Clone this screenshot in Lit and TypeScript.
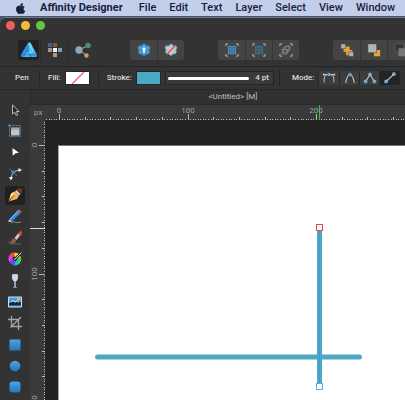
import { LitElement, html, svg, css } from "lit";
import { customElement, property, state } from "lit/decorators.js";
import { classMap } from "lit/directives/class-map.js";

const menus = ["File", "Edit", "Text", "Layer", "Select", "View", "Window"];

const flower = "M8 1.2c1.3 0 2 1 2.5 2.2 1.6-.4 3.6-.2 4.2 1.2.5 1.400-.4 2.500-1.300 3.400.9 1 1.300 2.400.4 3.600-.9 1.100-2.200 1-3.400.8-.5 1-1 1.900-2.400 1.900s-1.900-.9-2.400-1.900c-1.200.2-2.500.3-3.400-.8-.9-1.200-.5-2.600.4-3.600C1.700 7.100.800 6 1.300 4.600c.6-1.400 2.600-1.600 4.200-1.200C6 2.200 6.700 1.200 8 1.200z";

const corners = svg`<path d="M1 3.500V1h2.500M12.500 1H15v2.500M15 12.500V15h-2.500M3.500 15H1v-2.500" fill="none" stroke="#c4c4c4"/>`;

const grid = (color: string, steps: number[], weight: number) =>
  steps.map((p) => svg`<path d="M${p} 3V13M3 ${p}H13" stroke=${color} stroke-width=${weight}/>`);

const art: Record<string, unknown> = {
  designer: svg`
    <defs><linearGradient id="g" x1="0" y1="0" x2="1" y2="1"><stop offset="0" stop-color="#5fe6ee"/><stop offset="1" stop-color="#3fa2f4"/></linearGradient></defs>
    <path d="M7.500.5h2L16 13l-.8 2H.8L0 13z" fill="url(#g)"/>
    <path d="M7.500.5 0 13l.8 2H3l5-7z" fill="#2b8df0"/>
    <path d="m8 1 4 8-8 4.500" fill="none" stroke="#8ff5e4" stroke-width=".8"/>
    <path d="M1 12.800h14M6 8l4 7" stroke="#1b62b4" stroke-width=".7"/>`,
  pixel: svg`
    <path d="M1 1h4v4H1z" fill="#46617a"/><path d="M6 1h4v4H6z" fill="#80574d"/>
    <path d="M1 6h4v4H1z" fill="#a39488"/><path d="M6 6h4v4H6z" fill="#f2f2f2"/><path d="M11 6h4v4h-4z" fill="#7f9cb8"/>
    <path d="M6 11h4v4H6z" fill="#b99872"/>`,
  share: svg`
    <path d="M4 8 13 3.500M4 8l7.500 5.500" stroke="#aaa" stroke-width="1"/>
    <circle cx="4" cy="8" r="3.700" fill="#91a5bf"/><circle cx="13" cy="3.500" r="2.700" fill="#4b8d83"/><circle cx="11.500" cy="13.500" r="2.200" fill="#c2a16d"/>`,
  addFlower: svg`<path d=${flower} fill="#4b9bd5" stroke="#3a8bc8"/><path d="M8 4.500 10.500 7.200H9V11H7V7.200H5.500z" fill="#fff"/>`,
  noFlower: svg`<path d=${flower} fill="#c3c7ca" stroke="#3e97d5"/><path d="m3.500 12.500 9-9" stroke="#eb4a3d" stroke-width="1.500"/>`,
  gridFull: svg`${corners}${grid("#4297cf", [4, 6, 8, 10, 12], 0.9)}`,
  gridHalf: svg`${corners}${grid("#397fac", [4.5, 8, 11.5], 1)}`,
  shapes: svg`${corners}<g fill="none" stroke="#888"><path d="M3.500 7.500h6v5h-6z"/><circle cx="10" cy="6" r="2.700"/><path d="m5 5 7-1.500-1 6.500L5 11z"/></g>`,
  arrangeA: svg`<path d="M4 4h7v4h3v6H7v-4H4z" fill="#e8a33b"/><path d="M1 1h5.500v5.500H1zM10 10h5.500v5.500H10z" fill="#b0b0b0" stroke="#444" stroke-width=".6"/>`,
  arrangeB: svg`<path d="M8 8h7v7H8z" fill="#e8a33b"/><path d="M1 1h10v10H1z" fill="#b4b4b4" stroke="#444" stroke-width=".6"/>`,
  arrangeC: svg`<path d="M1 1h10v9H1z" fill="#333" stroke="#5a5a5a"/><path d="M5 6h11v9H5z" fill="#777"/>`,
  modePen: svg`<path d="M2.500 13V8Q3 5 6 4h4q3 1 3.500 4v5M2 4h12" fill="none" stroke="#ccc"/><path d="M1 3h2v2H1zM13 3h2v2h-2z" fill="#ccc"/><circle cx="8" cy="4" r="1.900" fill="#58a6dc"/>`,
  modeSmart: svg`<path d="M3 13.500Q5 4 8 4t5 9.500" fill="none" stroke="#ccc" stroke-width="1.200"/><circle cx="8" cy="4" r="1.900" fill="#58a6dc"/>`,
  modePoly: svg`<path d="m3 12 5-8 5 8" fill="none" stroke="#ccc" stroke-width="1.200"/><g fill="#58a6dc" stroke="#b9d9ee" stroke-width=".6"><circle cx="8" cy="4" r="1.700"/><circle cx="3" cy="12" r="1.700"/><circle cx="13" cy="12" r="1.700"/></g>`,
  modeLine: svg`<path d="m3.500 12 9-8.500" stroke="#ccc" stroke-width="1.200"/><g fill="#58a6dc" stroke="#b9d9ee" stroke-width=".6"><circle cx="3.500" cy="12" r="1.800"/><circle cx="12.500" cy="3.500" r="1.800"/></g>`,
  move: svg`<path d="M5.500 3v9l2.200-2 1.500 3.500 1.600-.7-1.500-3.300h2.900z" fill="#222" stroke="#c8c8c8" stroke-width=".9"/>`,
  artboard: svg`<path d="M4 4.500h8.500v8H4z" fill="#c4c4c4"/><path d="M4 6h8.500" stroke="#8d8d8d"/><path d="M2.500 2.500h11v11h-11z" fill="none" stroke="#3d8ec8" stroke-width="1" stroke-dasharray="2 1"/><path d="M1.500 1.500h2v2h-2z" fill="#459cdb"/>`,
  node: svg`<path d="m5.500 4 6.500 4.800-3.300.4-3 2.500z" fill="#fff"/>`,
  corner: svg`<path d="M4 13Q4.500 4.500 13 4" fill="none" stroke="#c4c4c4"/><path d="m2.500 2.500 7.500 7.500" stroke="#3a7db0"/><path d="m11.500 2 3.500 2-3.500 2zM2 11l2 3.500L6 11z" fill="#eee"/><path d="M4.500 4.500h3v3h-3z" fill="#318ee0"/>`,
  pen: svg`<path d="M1.500 14.500 4 6.500l4-2 4 4-2 3.500z" fill="#f0b957"/><path d="m4 6.500 4-2-5 8z" fill="#ffe4a4"/><path d="m1.500 14.500 5.500-6" stroke="#604019"/><path d="m8 4.500 1.500-1.500 4 4L12 8.500z" fill="#d8cfc6"/><path d="m9.500 3 2-2 4 1-.5 3-1.500 2z" fill="#6e3626"/>`,
  pencil: svg`<path d="m2 11.500 8.500-9 3 2.500L5 13.500l-3.500.5z" fill="#328bdc"/><path d="m3.500 11 8-8.500" stroke="#8ccaff"/><path d="m10.500 2.500 1.300-1.300 3 2.500L13.500 5z" fill="#d9634c"/><path d="m2 11.500 3 2-3.500.5z" fill="#f5d29c"/><path d="M4 15c4-3 5 1 10-1" fill="none" stroke="#aaa" stroke-width=".8"/>`,
  brush: svg`<path d="m7.500 8 4-5 2 2-4 5z" fill="#d4cac4"/><path d="m11 3.500 2-2.500 2 .5v2.500l-2 2z" fill="#d84a31"/><path d="M3 13c1-1 1-3.500 3.500-5l3 2.500c-1 2.500-4 3.500-6.500 2.500z" fill="#a65a27"/><path d="M1 11c2 5 7 2 13 3" fill="none" stroke="#397698" stroke-width=".9"/>`,
  fillTool: svg`<g stroke-width="4" fill="none"><path d="M4 4.800A4.400 4.400 0 0 1 8 3.700" stroke="#f2473c"/><path d="M7.500 3.700A4.400 4.400 0 0 1 12 7" stroke="#f0dc32"/><path d="M12 6.500A4.400 4.400 0 0 1 11 11" stroke="#47d43c"/><path d="M11.300 10.700A4.400 4.400 0 0 1 7.500 12.500" stroke="#27b7e8"/><path d="M8 12.500A4.400 4.400 0 0 1 4 9.300" stroke="#5453ed"/><path d="M4 10A4.400 4.400 0 0 1 5 4.500" stroke="#e63bd0"/></g><path d="m7 9 7-7" stroke="#333" stroke-width="2.500"/><path d="m7 9 7.500-7.500" stroke="#ccc"/>`,
  glass: svg`<path d="M5.500 1.500h5q1 6-2.500 7-3.500-1-2.500-7z" fill="#c9d8f4" stroke="#eee" stroke-width=".6"/><path d="M8 8.500V14" stroke="#e5e9f4" stroke-width="1.200"/><path d="M5.500 14.500q2.500-1.500 5 0z" fill="#dfe7f8"/>`,
  photo: svg`<path d="M1.500 3h13v10h-13z" fill="#4a9fe6" stroke="#ddd"/><path d="M2 9.500q3-3 6-1 3-2 6 0v3H2z" fill="#13294a"/><path d="m4 8 2-1.500L8 8l2-1 2 1.500" fill="none" stroke="#d4ecff" stroke-width=".9"/><circle cx="11.500" cy="5.300" r="1.200" fill="#f1cf48"/>`,
  crop: svg`<path d="M4.500 1v10.500H15M1 4.500h10.500V15M3.500 12.500 14 2" fill="none" stroke="#aaa59c" stroke-width="1.300"/>`,
  rect: svg`<path d="M2.500 2.500h11v11h-11z" fill="url(#b)"/>`,
  ellipse: svg`<circle cx="8" cy="8" r="5.300" fill="url(#b)"/>`,
  rounded: svg`<rect x="2.500" y="2.500" width="11" height="11" rx="3" fill="url(#b)"/>`,
};

const blue = svg`<defs><linearGradient id="b" x1="0" y1="0" x2="0" y2="1"><stop offset="0" stop-color="#4ba3e6"/><stop offset="1" stop-color="#2478bd"/></linearGradient></defs>`;

const icon = (name: string) => html`<svg class="icon" viewBox="0 0 16 16" aria-hidden="true">${blue}${art[name]}</svg>`;

const tools: [string, string][] = [
  ["move", "Move Tool"], ["artboard", "Artboard Tool"], ["node", "Node Tool"], ["corner", "Corner Tool"],
  ["pen", "Pen Tool"], ["pencil", "Pencil Tool"], ["brush", "Vector Brush Tool"], ["fillTool", "Fill Tool"],
  ["glass", "Transparency Tool"], ["photo", "Place Image Tool"], ["crop", "Vector Crop Tool"],
  ["rect", "Rectangle Tool"], ["ellipse", "Ellipse Tool"], ["rounded", "Rounded Rectangle Tool"],
];

const shared = css`
  * { box-sizing: border-box; }
  button {
    display: flex;
    align-items: center;
    justify-content: center;
    flex: none;
    padding: 0;
    border: 0;
    background: none;
    color: inherit;
    font: inherit;
  }
  .icon { display: block; width: 16px; height: 16px; flex: none; }
`;

// A ruler edge whose ticks fill whatever length the layout gives it.
@customElement("page-ruler")
export class PageRuler extends LitElement {
  @property({ type: Boolean, reflect: true }) vertical = false;
  @property({ type: Number }) origin = 0;
  @property({ type: Number }) marker = 0;
  @state() private extent = 0;

  private observer = new ResizeObserver(() => this.measure());

  static styles = css`
    :host { display: block; min-width: 0; min-height: 0; overflow: hidden; }
    svg { display: block; width: 100%; height: 100%; }
    .label { font: 8px "Roboto", sans-serif; fill: #a2a2a2; text-anchor: middle; }
    .minor { stroke: #bcbcbc; }
    .major { stroke: #b4b4b4; }
    .marker { stroke: #4fb443; }
    .marker.across { stroke: #dcdcdc; }
  `;

  connectedCallback() {
    super.connectedCallback();
    this.observer.observe(this);
  }

  disconnectedCallback() {
    this.observer.disconnect();
    super.disconnectedCallback();
  }

  firstUpdated() {
    this.measure();
  }

  private measure() {
    this.extent = this.vertical ? this.clientHeight : this.clientWidth;
  }

  render() {
    const v = this.vertical;
    const line = (at: number, len: number, cls: string) => {
      const p = Math.round(at) + 0.5;
      return v
        ? svg`<line class=${cls} x1=${15 - len} x2="15" y1=${p} y2=${p}/>`
        : svg`<line class=${cls} y1=${15 - len} y2="15" x1=${p} x2=${p}/>`;
    };
    const step = 2.57;
    const marks: unknown[] = [];
    for (let i = -Math.floor(this.origin / step); this.origin + i * step < this.extent + 6; i++) {
      const at = this.origin + i * step;
      if (i % 50 === 0) {
        const p = Math.round(at);
        marks.push(line(at, 6, "major"));
        marks.push(v
          ? svg`<text class="label" transform="translate(7 ${p}) rotate(-90)">${i * 2}</text>`
          : svg`<text class="label" x=${p} y="8">${i * 2}</text>`);
      } else {
        marks.push(line(at, i % 10 === 0 ? 3 : 1, "minor"));
      }
    }
    return html`<svg aria-hidden="true">${marks}${line(this.marker, 15, v ? "marker across" : "marker")}</svg>`;
  }
}

@customElement("app-root")
export class AppRoot extends LitElement {
  static styles = [shared, css`
    :host {
      display: flex;
      flex-direction: column;
      height: 100vh;
      overflow: hidden;
      background: #38577b;
      color: #dedede;
      font: 500 8px/12px "Roboto", sans-serif;
    }
    .menubar {
      display: flex;
      align-items: center;
      flex: none;
      gap: 13px;
      height: 17px;
      padding: 0 8px 0 14px;
      background: #c3cfea;
      border-bottom: 1px solid #42557d;
      color: #18223d;
      font-size: 11px;
      font-weight: 500;
      line-height: 16px;
      white-space: nowrap;
    }
    .menubar .app { margin-right: 3px; font-weight: 700; }
    .apple { width: 13px; height: 13px; flex: none; }
    .window {
      display: flex;
      flex-direction: column;
      flex: 1;
      min-height: 0;
      background: #333;
      border-top: 1px solid #777;
      border-radius: 6px 0 0 0;
      overflow: hidden;
    }
    .lights { display: flex; flex: none; gap: 6px; height: 16px; padding: 3px 6px; }
    .lights button { width: 9px; height: 9px; border-radius: 50%; }
    .lights .close { background: #ee6158; }
    .lights .minimise { background: #f6bd36; }
    .lights .zoom { background: #60c842; }
    .toolbar {
      display: flex;
      align-items: center;
      flex: none;
      gap: 34px;
      height: 33px;
      padding: 0 0 0 18px;
      border-bottom: 1px solid #242424;
    }
    .personas { display: flex; gap: 1px; padding-right: 1px; }
    .personas button { width: 25px; height: 20px; }
    .personas .active { width: 21px; background: #222; border-radius: 2px; }
    .personas .sep { height: 20px; background: #2b2b2b; }
    .group { display: flex; flex: none; border-radius: 3px; overflow: hidden; }
    .group button { width: 27px; height: 20px; background: #444; }
    .group button + button { border-left: 1px solid #363636; }
    .group .icon { width: 14px; height: 14px; }
    .context {
      display: flex;
      align-items: center;
      flex: none;
      height: 23px;
      padding: 0 4px 0 15px;
      border-bottom: 1px solid #272727;
      white-space: nowrap;
    }
    .tool-name { flex: none; width: 24px; }
    .sep { width: 1px; height: 15px; background: #262626; flex: none; }
    .field { display: flex; align-items: center; gap: 4px; padding: 0 8px; flex: none; }
    .swatch { width: 25px; height: 14px; border: 1px solid #262626; }
    .swatch.none { background: #fff; }
    .swatch.none svg { width: 100%; height: 100%; display: block; }
    .swatch.teal { background: #4ba9c5; }
    .field.stroke { padding: 0 4px 0 8px; }
    .width {
      gap: 6px;
      width: 109px;
      height: 14px;
      padding: 0 4px 0 2px;
      border: 1px solid #242424;
      background: #3a3a3a;
    }
    .width .bar { flex: 1; height: 3px; border-radius: 2px; background: #fff; }
    .width + .sep { margin-left: 5px; }
    .field.mode { padding: 0 0 0 12px; }
    .modes { display: flex; padding: 0 1px; background: #282828; }
    .modes button { width: 20px; height: 14px; background: #3d3d3d; }
    .modes button + button { border-left: 1px solid #282828; }
    .modes .icon { width: 14px; height: 14px; }
    .modes .active { background: #232323; }
    .body { display: flex; flex: 1; min-height: 0; }
    .tools {
      display: flex;
      flex-direction: column;
      justify-content: space-between;
      align-items: center;
      flex: none;
      width: 30px;
      padding: 10px 0 3px;
    }
    .tools button { width: 20px; height: 19px; border-radius: 2px; }
    .tools .active { background: #202020; }
    .document { display: flex; flex-direction: column; flex: 1; min-width: 0; }
    .tab {
      flex: none;
      height: 15px;
      line-height: 14px;
      padding-left: 30px;
      border-left: 1px solid #272727;
      border-bottom: 1px solid #292929;
      background: #303030;
      color: #c0c0c0;
      text-align: center;
      font-weight: 400;
    }
    .sheet {
      display: grid;
      flex: 1;
      min-height: 0;
      grid-template-columns: 15px 1fr;
      grid-template-rows: 15px 1fr;
      background: #3a3a3a;
    }
    .unit { color: #a2a2a2; padding: 2px 0 0 4px; line-height: 12px; font-weight: 400; }
    .canvas { position: relative; min-width: 0; min-height: 0; overflow: hidden; padding: 25px 0 0 13px; background: #222; }
    .artboard { height: 100%; background: #fff; border-left: 1px solid #a9a9a9; border-top: 1px solid #777; }
    .drawing { position: absolute; inset: 0; width: 100%; height: 100%; }
  `];

  private tool(name: string, label: string, active = false) {
    return html`<button class=${classMap({ active })} aria-label=${label} title=${label}>${icon(name)}</button>`;
  }

  render() {
    return html`
      <nav class="menubar" aria-label="Menu bar">
        <svg class="apple" viewBox="0 0 24 24" aria-label="Apple" role="img"><path fill="#18223d" d="M17 12.700c0-2.300 1.900-3.400 2-3.500-1.100-1.600-2.800-1.800-3.400-1.800-1.400-.2-2.800.8-3.500.8s-1.800-.8-3-.8C7.500 7.400 6 8.300 5.200 9.700c-1.700 2.900-.4 7.200 1.200 9.500.8 1.200 1.700 2.500 3 2.400 1.200 0 1.700-.8 3.100-.8 1.500 0 1.900.8 3.200.8 1.300 0 2.100-1.200 2.900-2.300.9-1.400 1.300-2.700 1.300-2.800-.1 0-2.900-1.100-2.900-3.800zM14.800 5.700c.6-.8 1.100-1.900.9-3-.9 0-2.100.6-2.700 1.400-.6.700-1.200 1.800-1 2.900 1.100.1 2.200-.5 2.800-1.300z" stroke="#18223d" stroke-width="1.500"/></svg>
        <button class="app">Affinity Designer</button>
        ${menus.map((m) => html`<button>${m}</button>`)}
      </nav>
      <main class="window">
        <div class="lights">
          <button class="close" aria-label="Close"></button>
          <button class="minimise" aria-label="Minimise"></button>
          <button class="zoom" aria-label="Zoom"></button>
        </div>
        <div class="toolbar">
          <div class="personas">
            ${this.tool("designer", "Designer Persona", true)}
            <span class="sep"></span>
            ${this.tool("pixel", "Pixel Persona")}
            <span class="sep"></span>
            ${this.tool("share", "Export Persona")}
          </div>
          <div class="group">${this.tool("addFlower", "Synchronise defaults")}${this.tool("noFlower", "Revert defaults")}</div>
          <div class="group">${this.tool("gridFull", "Show grid")}${this.tool("gridHalf", "Snap to grid")}${this.tool("shapes", "Snapping")}</div>
          <div class="group">${this.tool("arrangeA", "Move to back")}${this.tool("arrangeB", "Back one")}${this.tool("arrangeC", "Forward one")}</div>
        </div>
        <div class="context">
          <span class="tool-name">Pen</span>
          <span class="sep"></span>
          <div class="field">
            <span>Fill:</span>
            <button class="swatch none" aria-label="Fill colour"><svg viewBox="0 0 23 12" aria-hidden="true"><path d="m6 12 12-12" stroke="#ef7770" stroke-width="1.500"/></svg></button>
          </div>
          <span class="sep"></span>
          <div class="field stroke"><span>Stroke:</span><button class="swatch teal" aria-label="Stroke colour"></button></div>
          <button class="width" aria-label="Stroke width"><span class="bar"></span><span>4 pt</span></button>
          <span class="sep"></span>
          <div class="field mode">
            <span>Mode:</span>
            <div class="modes">
              ${this.tool("modePen", "Pen mode")}${this.tool("modeSmart", "Smart mode")}${this.tool("modePoly", "Polygon mode")}${this.tool("modeLine", "Line mode", true)}
            </div>
          </div>
        </div>
        <div class="body">
          <div class="tools" role="toolbar" aria-label="Tools">
            ${tools.map(([name, label]) => this.tool(name, label, name === "pen"))}
          </div>
          <section class="document">
            <div class="tab">&lt;Untitled&gt; [M]</div>
            <div class="sheet">
              <span class="unit">px</span>
              <page-ruler .origin=${14} .marker=${274}></page-ruler>
              <page-ruler vertical .origin=${25} .marker=${108}></page-ruler>
              <div class="canvas">
                <div class="artboard"></div>
                <svg class="drawing" role="img" aria-label="Two crossing strokes">
                  <g fill="none" stroke="#4ba9c5" stroke-width="5" stroke-linecap="round">
                    <path d="M52.500 237H314.500"/>
                    <path d="M274.500 108V266"/>
                  </g>
                  <path d="M274.500 108V266" stroke="#439bc9"/>
                  <rect x="271.500" y="104.500" width="6" height="6" fill="#fff" stroke="#e9493f"/>
                  <rect x="271.500" y="263.500" width="6" height="6" fill="#fff" stroke="#60aaf0"/>
                </svg>
              </div>
            </div>
          </section>
        </div>
      </main>
    `;
  }
}
